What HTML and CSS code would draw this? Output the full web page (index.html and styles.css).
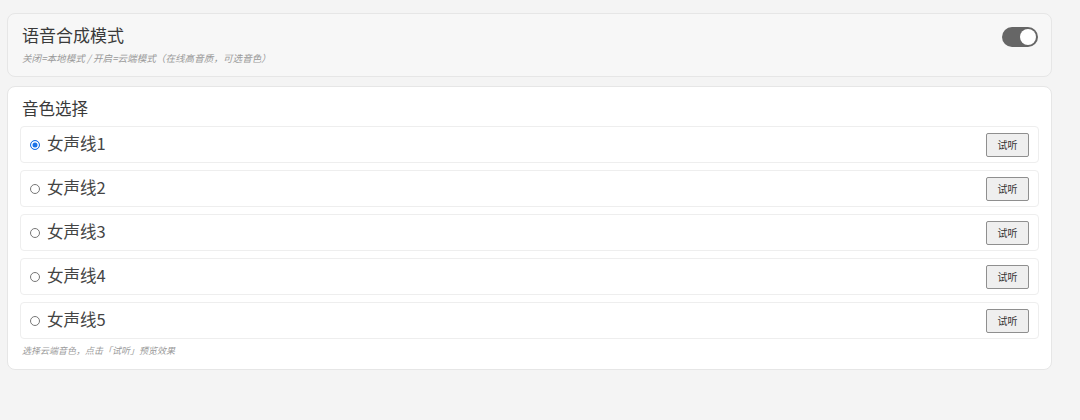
FILE: index.html
```html
<!DOCTYPE html>
<html lang="zh-CN">
<head>
<meta charset="utf-8">
<link rel="stylesheet" href="styles.css">
</head>
<body>
<div class="page">
  <section class="card card-mode">
    <div class="mode-text">
      <div class="title">语音合成模式</div>
      <div class="hint">关闭=本地模式 / 开启=云端模式（在线高音质，可选音色）</div>
    </div>
    <div class="toggle"><span class="knob"></span></div>
  </section>
  <section class="card card-voice">
    <div class="title">音色选择</div>
    <div class="list">
      <label class="row"><span class="radio checked"></span><span class="name">女声线1</span><button class="try">试听</button></label>
      <label class="row"><span class="radio"></span><span class="name">女声线2</span><button class="try">试听</button></label>
      <label class="row"><span class="radio"></span><span class="name">女声线3</span><button class="try">试听</button></label>
      <label class="row"><span class="radio"></span><span class="name">女声线4</span><button class="try">试听</button></label>
      <label class="row"><span class="radio"></span><span class="name">女声线5</span><button class="try">试听</button></label>
    </div>
    <div class="hint foot">选择云端音色，点击「试听」预览效果</div>
  </section>
</div>
</body>
</html>
```
FILE: styles.css
```css
html, body {
  margin: 0;
  padding: 0;
  background: #f4f4f4;
  font-family: "Noto Sans CJK SC", "Noto Sans", sans-serif;
  color: #333;
}
.page {
  padding: 13px 28px 0 7px;
  display: flex;
  flex-direction: column;
  gap: 9px;
}
.card {
  border: 1px solid #e6e6e6;
  border-radius: 8px;
}
.card-mode {
  background: #f7f7f7;
  height: 62px;
  box-sizing: content-box;
  display: flex;
  align-items: flex-start;
  justify-content: space-between;
  padding: 0 13px 0 14px;
}
.mode-text {
  padding-top: 9px;
}
.title {
  font-size: 17px;
  line-height: 24px;
  font-weight: 400;
  color: #3a3a3a;
}
.hint {
  font-size: 9px;
  line-height: 14px;
  font-style: italic;
  color: #9a9a9a;
}
.mode-text .hint {
  margin-top: 4px;
  font-size: 9.6px;
}
.toggle {
  margin-top: 13px;
  width: 36px;
  height: 20px;
  border-radius: 10px;
  background: #666;
  position: relative;
}
.knob {
  position: absolute;
  right: 2px;
  top: 2px;
  width: 16px;
  height: 16px;
  border-radius: 50%;
  background: #fff;
}
.card-voice {
  background: #fff;
  padding: 9px 12px 11px 12px;
}
.card-voice > .title {
  font-size: 16.5px;
  padding-left: 2px;
  margin-bottom: 6px;
}
.list {
  display: flex;
  flex-direction: column;
  gap: 7px;
}
.row {
  display: flex;
  align-items: center;
  height: 35px;
  border: 1px solid #eee;
  border-radius: 4px;
  padding: 0 9px 0 9px;
}
.radio {
  width: 8px;
  height: 8px;
  border: 1px solid #777;
  border-radius: 50%;
  box-sizing: content-box;
  margin-right: 7px;
}
.radio.checked {
  border-color: #1a73e8;
  background: #1a73e8;
  box-shadow: inset 0 0 0 1.5px #fff;
}
.name {
  font-size: 16.5px;
  color: #444;
  flex: 1;
  margin-bottom: 4px;
}
.try {
  font-family: "Noto Sans CJK SC", sans-serif;
  font-size: 10px;
  color: #333;
  background: #efefef;
  border: 1px solid #8f8f8f;
  border-radius: 2px;
  width: 43px;
  height: 24px;
  padding: 0;
}
.foot {
  margin-top: 5px;
  padding-left: 2px;
}
```
